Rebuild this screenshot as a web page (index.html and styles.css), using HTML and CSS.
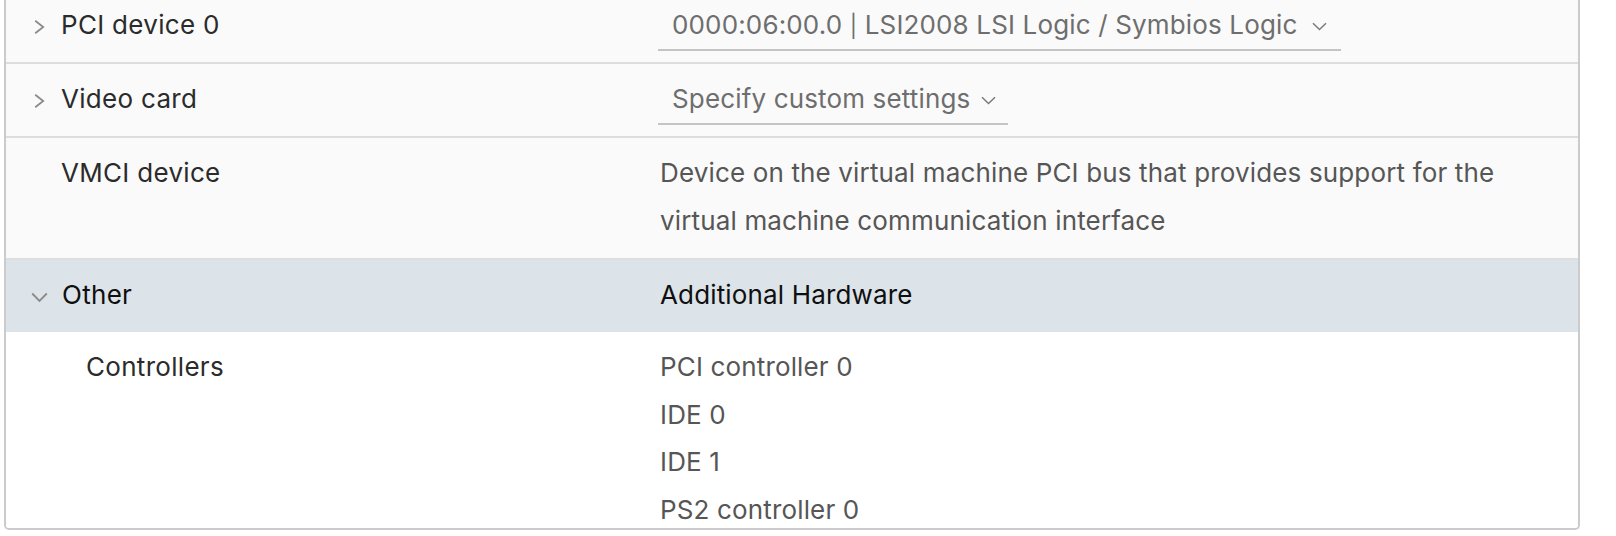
FILE: index.html
```html
<!DOCTYPE html>
<html lang="en">
<head>
    <meta charset="UTF-8"/>
    <meta name="viewport" content="width=device-width, initial-scale=1.0"/>
    <title>Virtual Hardware</title>
    <link rel="stylesheet" href="styles.css">
</head>
<body>
<div class="stack-view">
    <div class="stack-scroll">
        <!-- PCI device -->
        <div class="stack-block">
            <div class="stack-label">
                <span class="caret">
                    <svg width="11" height="14" viewBox="0 0 11 14"><path d="M1.2 0.8 L9.2 7 L1.2 13.2"/></svg>
                </span>
                PCI device 0
            </div>
            <div class="stack-content">
                <div class="select">
                    <span>0000:06:00.0 <span class="pipe">|</span> LSI2008 LSI Logic / Symbios Logic</span>
                    <svg class="select-caret" width="15" height="9" viewBox="0 0 15 9"><path d="M1 1.2 L7.5 7.5 L14 1.2"/></svg>
                </div>
            </div>
        </div>

        <!-- Video card -->
        <div class="stack-block">
            <div class="stack-label">
                <span class="caret">
                    <svg width="11" height="14" viewBox="0 0 11 14"><path d="M1.2 0.8 L9.2 7 L1.2 13.2"/></svg>
                </span>
                Video card
            </div>
            <div class="stack-content">
                <div class="select select-short">
                    <span>Specify custom settings</span>
                    <svg class="select-caret" width="15" height="9" viewBox="0 0 15 9"><path d="M1 1.2 L7.5 7.5 L14 1.2"/></svg>
                </div>
            </div>
        </div>

        <!-- VMCI device -->
        <div class="stack-block">
            <div class="stack-label">
                <span class="caret"></span>
                VMCI device
            </div>
            <div class="stack-content">
                Device on the virtual machine PCI bus that provides support for the virtual machine communication interface
            </div>
        </div>

        <!-- Other (expanded) -->
        <div class="stack-block expanded">
            <div class="stack-label">
                <span class="caret caret-down">
                    <svg width="17" height="11" viewBox="0 0 17 11"><path d="M1.2 1.5 L8.5 9 L15.8 1.5"/></svg>
                </span>
                Other
            </div>
            <div class="stack-content">Additional Hardware</div>
        </div>

        <div class="stack-children">
            <div class="stack-block child">
                <div class="stack-label">Controllers</div>
                <div class="stack-content">
                    <ul class="value-list">
                        <li>PCI controller 0</li>
                        <li>IDE 0</li>
                        <li>IDE 1</li>
                        <li>PS2 controller 0</li>
                    </ul>
                </div>
            </div>
        </div>
    </div>
</div>
</body>
</html>
```

FILE: styles.css
```css
:root {
    --card-border: #cbcbcb;
    --row-border: #dddddd;
    --row-bg: #fafafa;
    --expanded-bg: #dce3e9;
    --label-color: #2b2b2b;
    --value-color: #565656;
    --select-color: #6e6e6e;
    --caret-color: #8a8a8a;
}

* {
    margin: 0;
    padding: 0;
    box-sizing: border-box;
}

body {
    font-family: "Inter", "Noto Sans", sans-serif;
    font-size: 26px;
    letter-spacing: 0.15px;
    color: var(--label-color);
    background: #ffffff;
}

/* card holding the stack rows, scrolled so the top is cut off */
.stack-view {
    margin-left: 4px;
    width: 1576px;
    height: 530px;
    border: 2px solid var(--card-border);
    border-top: none;
    border-radius: 0 0 5px 5px;
    overflow: hidden;
}

.stack-scroll {
    margin-top: -10px;
}

.stack-block {
    display: grid;
    grid-template-columns: 654px 1fr;
    background-color: var(--row-bg);
    border-bottom: 2px solid var(--row-border);
    padding: 11px 0 13px;
    line-height: 48px;
}

.stack-label {
    display: flex;
    align-items: flex-start;
    font-weight: 400;
    letter-spacing: 0.3px;
}

.caret {
    flex: none;
    width: 27px;
    height: 48px;
    margin-left: 28px;
    padding-top: 4px;
    display: flex;
    align-items: center;
}

.caret svg {
    flex: none;
}

.caret svg path,
.select-caret path {
    fill: none;
    stroke: var(--caret-color);
    stroke-width: 1.8;
}

.caret-down {
    margin-left: 25px;
    width: 31px;
}

.stack-content {
    color: var(--value-color);
    padding-right: 24px;
}

/* underlined dropdown */
.select {
    display: inline-flex;
    align-items: center;
    height: 50px;
    margin: 0 0 -2px -2px;
    padding: 0 14px 0 14px;
    border-bottom: 2px solid #c4c4c4;
    color: var(--select-color);
}

.pipe {
    font-size: 22px;
    line-height: 0;
}

.select-caret {
    flex: none;
    margin-left: 15px;
    margin-top: 2px;
}

.select-caret path {
    stroke: #7a7a7a;
    stroke-width: 1.5;
}

.select-short .select-caret {
    margin-left: 11px;
}

.select-short {
    padding-right: 12px;
}

.expanded {
    background-color: var(--expanded-bg);
    border-bottom: none;
}

.expanded .stack-label,
.expanded .stack-content {
    color: #0f0f0f;
}

.stack-children .stack-block {
    background-color: #ffffff;
    border-bottom: none;
    padding-top: 11px;
}

.child .stack-label {
    padding-left: 80px;
}

.value-list {
    list-style: none;
    line-height: 47.5px;
}
```
